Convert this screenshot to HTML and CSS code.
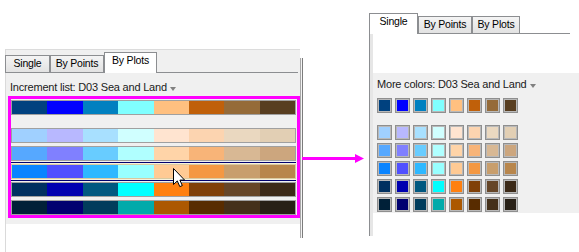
FILE: index.html
```html
<!DOCTYPE html>
<html>
<head>
<meta charset="utf-8">
<title>Color increment list</title>
<link rel="stylesheet" href="styles.css">
</head>
<body>
<div class="stage">
  <section class="lpanel">
    <div class="lmain">
      <div class="lgray">
        <div class="tabs tabs-left">
          <div class="tab">Single</div>
          <div class="tab">By Points</div>
          <div class="tab sel">By Plots</div>
        </div>
        <div class="label">Increment list: D03 Sea and Land<span class="caret"></span></div>
        <div class="hilite">
          <div class="crow r1"><i></i><i></i><i></i><i></i><i></i><i></i><i></i><i></i></div>
          <div class="crow r2 gap-lg"><i></i><i></i><i></i><i></i><i></i><i></i><i></i><i></i></div>
          <div class="crow r3 gap"><i></i><i></i><i></i><i></i><i></i><i></i><i></i><i></i></div>
          <div class="selrow">
            <div class="crow r4 hot"><i></i><i></i><i></i><i></i><i></i><i></i><i></i><i></i></div>
          </div>
          <div class="crow r5 after-sel"><i></i><i></i><i></i><i></i><i></i><i></i><i></i><i></i></div>
          <div class="crow r6 gap"><i></i><i></i><i></i><i></i><i></i><i></i><i></i><i></i></div>
        </div>
      </div>
    </div>
    <div class="ledge"></div>
  </section>

  <section class="rpanel">
    <div class="tabs tabs-right">
      <div class="tab sel">Single</div>
      <div class="tab">By Points</div>
      <div class="tab">By Plots</div>
    </div>
    <div class="rbody">
      <div class="rstrip"></div>
      <div class="rcontent">
        <div class="rwhite"></div>
        <div class="rgray">
          <div class="label">More colors: D03 Sea and Land<span class="caret"></span></div>
          <div class="sgrid">
            <div class="srow r1"><i></i><i></i><i></i><i></i><i></i><i></i><i></i><i></i></div>
            <div class="srow r2 first-light"><i></i><i></i><i></i><i></i><i></i><i></i><i></i><i></i></div>
            <div class="srow r3"><i></i><i></i><i></i><i></i><i></i><i></i><i></i><i></i></div>
            <div class="srow r4"><i></i><i></i><i></i><i></i><i></i><i></i><i></i><i></i></div>
            <div class="srow r5"><i></i><i></i><i></i><i></i><i></i><i></i><i></i><i></i></div>
            <div class="srow r6"><i></i><i></i><i></i><i></i><i></i><i></i><i></i><i></i></div>
          </div>
        </div>
      </div>
    </div>
  </section>

  <svg class="arrow" viewBox="0 0 63 11" width="63" height="11">
    <rect x="0" y="4" width="54" height="3" fill="#ff00ff"/>
    <polygon points="53,1 62,5.5 53,10" fill="#ff00ff"/>
  </svg>

  <svg class="cursor" viewBox="0 0 13 20" width="13" height="20">
    <path d="M0.5 0.5 V16.5 L4.3 12.9 L6.8 18.6 L9.3 17.6 L6.9 12.1 H11.6 Z" fill="#fff" stroke="#000" stroke-width="1" stroke-linejoin="miter"/>
  </svg>
</div>
</body>
</html>
```

FILE: styles.css
```css
* { box-sizing: border-box; margin: 0; padding: 0; }
html, body { background: #fff; }
body {
  font-family: "Liberation Sans", Arial, sans-serif;
  font-size: 11px;
  color: #000;
  width: 579px;
  height: 252px;
  overflow: hidden;
}
.stage {
  position: relative;
  display: flex;
  align-items: flex-start;
  padding-left: 5px;
  width: 579px;
  height: 252px;
}

/* ---------- left panel ---------- */
.lpanel { display: flex; align-items: flex-start; margin-top: 49px; }
.lmain {
  width: 295px;
  height: 203px;
  border-left: 1px solid #dadada;
  border-top: 1px solid #dcdcdc;
  background: #fff;
}
.lgray { height: 174px; background: #f0f0f0; }
.ledge {
  width: 3px;
  height: 180px;
  margin-top: 9px;
  border-left: 1px solid #a8a8a8;
  border-right: 1px solid #7c7c7c;
  background: #f4f4f4;
}

/* ---------- tabs ---------- */
.tabs { display: flex; align-items: flex-end; border-bottom: 1px solid #8c8e91; }
.tabs-left { height: 23px; margin-left: -1px; margin-right: 2px; }
.tabs-right { height: 21px; margin-right: 9px; }
.tab {
  height: 17px;
  border: 1px solid #8c8e91;
  border-bottom: 0;
  background: linear-gradient(#f4f4f4, #e2e2e2);
  text-align: center;
  line-height: 15px;
  font-size: 10.5px;
  letter-spacing: -0.2px;
  white-space: nowrap;
}
.tab.sel { height: 21px; margin-bottom: -1px; background: #fff; }
.tabs-left .tab:nth-child(1) { width: 45px; }
.tabs-left .tab:nth-child(2) { width: 54px; }
.tabs-left .tab:nth-child(3) { width: 53px; }
.tabs-right .tab:nth-child(1) { width: 49px; }
.tabs-right .tab:nth-child(2) { width: 54px; }
.tabs-right .tab:nth-child(3) { width: 48px; }

/* ---------- label ---------- */
.label {
  margin-top: 8px;
  padding-left: 4px;
  line-height: 13px;
  letter-spacing: -0.2px;
  color: #1a1a1a;
  white-space: nowrap;
}
.caret {
  display: inline-block;
  width: 0;
  height: 0;
  margin-left: 3px;
  border-left: 3.5px solid transparent;
  border-right: 3.5px solid transparent;
  border-top: 4px solid #808080;
}

/* ---------- left colour rows ---------- */
.hilite {
  width: 292px;
  height: 122px;
  margin: 2px 0 0 2px;
  border: 3px solid #ff00ff;
  padding: 1px 1px 0 0;
}
.crow { display: flex; height: 15px; border: 1px solid #a0a0a0; }
.crow > i { flex: 1; display: block; }
.crow.gap-lg { margin-top: 13px; }
.crow.gap { margin-top: 3px; }
.crow.after-sel { margin-top: 1px; }
.selrow {
  margin-top: 1px;
  border-top: 1px solid #00006e;
  border-bottom: 1px solid #00006e;
  padding: 1px 0;
  background: #f7f1dc;
}
.crow.hot { border-color: #d8c9a0; }

/* ---------- right panel ---------- */
.rpanel { margin-left: 66px; margin-top: 13px; width: 210px; }
.rbody { display: flex; height: 202px; border-left: 1px solid #8c8e91; }
.rstrip { width: 3px; background: #e6e6e6; }
.rcontent { flex: 1; background: #fff; }
.rwhite { height: 39px; }
.rgray { height: 140px; background: #f0f0f0; padding: 5px 0 1px 4px; }
.rgray .label { margin-top: 0; padding-left: 0; }
.sgrid { margin-top: 7px; }
.srow { display: flex; gap: 3px; margin-top: 3px; }
.srow.r1 { margin-top: 0; }
.srow.first-light { margin-top: 12px; }
.srow > i {
  display: block;
  width: 15px;
  height: 15px;
  border: 1px solid #8f8f8f;
  box-shadow: inset 0 0 0 1px #b9b9b9;
}

/* ---------- palette ---------- */
.r1 > i:nth-child(1) { background: #00417f; }
.r1 > i:nth-child(2) { background: #0000ff; }
.r1 > i:nth-child(3) { background: #0080c0; }
.r1 > i:nth-child(4) { background: #80ffff; }
.r1 > i:nth-child(5) { background: #ffc080; }
.r1 > i:nth-child(6) { background: #c0600a; }
.r1 > i:nth-child(7) { background: #956b39; }
.r1 > i:nth-child(8) { background: #583e20; }

.r2 > i:nth-child(1) { background: #a0d0ff; }
.r2 > i:nth-child(2) { background: #b8b8ff; }
.r2 > i:nth-child(3) { background: #a8e0ff; }
.r2 > i:nth-child(4) { background: #d0ffff; }
.r2 > i:nth-child(5) { background: #ffe4d0; }
.r2 > i:nth-child(6) { background: #fcd4b0; }
.r2 > i:nth-child(7) { background: #ead8c0; }
.r2 > i:nth-child(8) { background: #e2cfb4; }

.r3 > i:nth-child(1) { background: #56a8ff; }
.r3 > i:nth-child(2) { background: #8080ff; }
.r3 > i:nth-child(3) { background: #68ccff; }
.r3 > i:nth-child(4) { background: #b0ffff; }
.r3 > i:nth-child(5) { background: #ffd4a8; }
.r3 > i:nth-child(6) { background: #f8b478; }
.r3 > i:nth-child(7) { background: #d8b894; }
.r3 > i:nth-child(8) { background: #cca67e; }

.r4 > i:nth-child(1) { background: #0a84ff; }
.r4 > i:nth-child(2) { background: #5050ff; }
.r4 > i:nth-child(3) { background: #2eb8ff; }
.r4 > i:nth-child(4) { background: #98ffff; }
.r4 > i:nth-child(5) { background: #ffca94; }
.r4 > i:nth-child(6) { background: #f49842; }
.r4 > i:nth-child(7) { background: #c89e6c; }
.r4 > i:nth-child(8) { background: #b8864c; }

.r5 > i:nth-child(1) { background: #003060; }
.r5 > i:nth-child(2) { background: #0000b0; }
.r5 > i:nth-child(3) { background: #005880; }
.r5 > i:nth-child(4) { background: #00ffff; }
.r5 > i:nth-child(5) { background: #ff8010; }
.r5 > i:nth-child(6) { background: #804008; }
.r5 > i:nth-child(7) { background: #664628; }
.r5 > i:nth-child(8) { background: #3c2a18; }

.r6 > i:nth-child(1) { background: #002038; }
.r6 > i:nth-child(2) { background: #000070; }
.r6 > i:nth-child(3) { background: #003c5c; }
.r6 > i:nth-child(4) { background: #00aaaa; }
.r6 > i:nth-child(5) { background: #ac5800; }
.r6 > i:nth-child(6) { background: #582c00; }
.r6 > i:nth-child(7) { background: #44301a; }
.r6 > i:nth-child(8) { background: #282016; }

/* ---------- annotation overlays ---------- */
.arrow { position: absolute; left: 302px; top: 153px; }
.cursor { position: absolute; left: 173px; top: 168px; }
```
